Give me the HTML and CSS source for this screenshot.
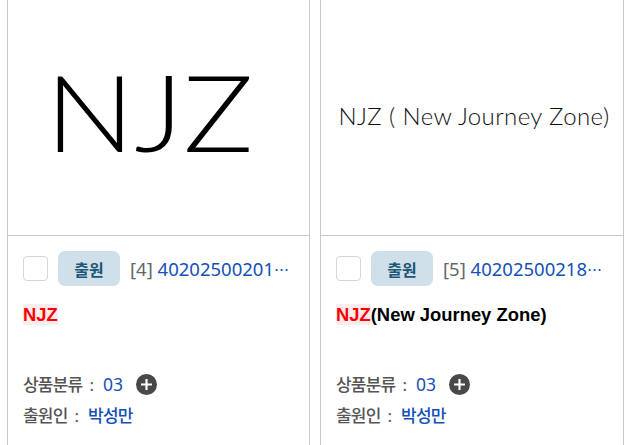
FILE: index.html
```html
<!DOCTYPE html>
<html lang="ko">
<head>
<meta charset="utf-8">
<link rel="stylesheet" href="styles.css">
</head>
<body>
<div class="grid">
  <div class="card">
    <div class="thumb"><span class="logo-big">NJZ</span></div>
    <div class="body">
      <div class="head">
        <span class="check"></span>
        <span class="badge">출원</span>
        <span class="num"><span class="idx">[4]</span> 40202500201<span class="ell">…</span></span>
      </div>
      <div class="title"><span class="hl">NJZ</span></div>
      <div class="meta">
        <div class="row"><span class="lbl">상품분류</span><span class="sep">:</span><span class="val num-val">03</span>
          <svg class="plus" viewBox="0 0 21 21"><circle cx="10.5" cy="10.5" r="10.5" fill="#484848"/><path d="M10.5 5v11M5 10.5h11" stroke="#fff" stroke-width="2.2"/></svg>
        </div>
        <div class="row"><span class="lbl">출원인</span><span class="sep">:</span><span class="val">박성만</span></div>
      </div>
    </div>
  </div>
  <div class="card">
    <div class="thumb"><span class="logo-small">NJZ ( New Journey Zone)</span></div>
    <div class="body">
      <div class="head">
        <span class="check"></span>
        <span class="badge">출원</span>
        <span class="num"><span class="idx">[5]</span> 40202500218<span class="ell">…</span></span>
      </div>
      <div class="title"><span class="hl">NJZ</span>(New Journey Zone)</div>
      <div class="meta">
        <div class="row"><span class="lbl">상품분류</span><span class="sep">:</span><span class="val num-val">03</span>
          <svg class="plus" viewBox="0 0 21 21"><circle cx="10.5" cy="10.5" r="10.5" fill="#484848"/><path d="M10.5 5v11M5 10.5h11" stroke="#fff" stroke-width="2.2"/></svg>
        </div>
        <div class="row"><span class="lbl">출원인</span><span class="sep">:</span><span class="val">박성만</span></div>
      </div>
    </div>
  </div>
</div>
</body>
</html>
```
FILE: styles.css
```css
* { box-sizing: border-box; }
html, body { margin: 0; background: #fff; }
body {
  font-family: "Noto Sans", "Noto Sans CJK KR", sans-serif;
  overflow: hidden;
  height: 445px;
}
.grid {
  display: grid;
  grid-template-columns: 303px 304px;
  column-gap: 10px;
  padding-left: 7px;
  margin-top: -1px;
}
.card {
  border: 1px solid #c9c9c9;
  height: 480px;
}
.thumb {
  height: 236px;
  border-bottom: 1px solid #c9c9c9;
  display: flex;
  align-items: center;
  justify-content: center;
}
.logo-big {
  font-family: "Lato", sans-serif;
  font-weight: 300;
  font-size: 107px;
  letter-spacing: 0;
  color: #000;
  margin: 0 18px -12px 0;
  position: relative;
  top: -13px;
  transform: scaleX(1.1);
}
.logo-small {
  font-family: "Lato", sans-serif;
  font-weight: 300;
  font-size: 24px;
  letter-spacing: 0.4px;
  color: #111;
  position: relative;
  top: -2px;
  left: 2px;
}
.body {
  padding: 15px 15px 0 15px;
}
.head {
  display: flex;
  align-items: center;
  height: 35px;
}
.check {
  width: 25px;
  height: 25px;
  border: 1px solid #d6d6d6;
  border-radius: 4px;
  flex: none;
}
.badge {
  margin-left: 10px;
  width: 62px;
  height: 35px;
  border-radius: 7px;
  background: #cfe0ea;
  color: #1f5675;
  font-weight: 700;
  font-size: 16px;
  display: flex;
  align-items: center;
  justify-content: center;
  flex: none;
}
.num {
  margin-left: 10px;
  font-size: 18.5px;
  color: #1450b8;
  white-space: nowrap;
}
.ell {
  font-family: "Noto Sans CJK KR", sans-serif;
  font-size: 15px;
  letter-spacing: -1px;
}
.idx { color: #666; }
.title {
  margin-top: 17px;
  font-family: "Liberation Sans", Arial, sans-serif;
  font-weight: 700;
  font-size: 18.4px;
  color: #000;
  line-height: 23px;
}
.hl {
  color: #f00;
  background: #fdecee;
}
.meta {
  margin-top: 47px;
  display: flex;
  flex-direction: column;
  gap: 8px;
}
.row {
  display: flex;
  align-items: center;
  font-size: 17px;
  line-height: 23px;
  letter-spacing: -0.8px;
}
.lbl { color: #555; font-weight: 500; }
.sep { color: #555; font-size: 17px; margin: 0 9px 0 7px; letter-spacing: 0; }
.val { color: #1450b8; font-weight: 500; }
.num-val { font-size: 17.5px; letter-spacing: 0; font-weight: 400; }
.plus {
  width: 21px;
  height: 21px;
  margin-left: 13px;
}
```
